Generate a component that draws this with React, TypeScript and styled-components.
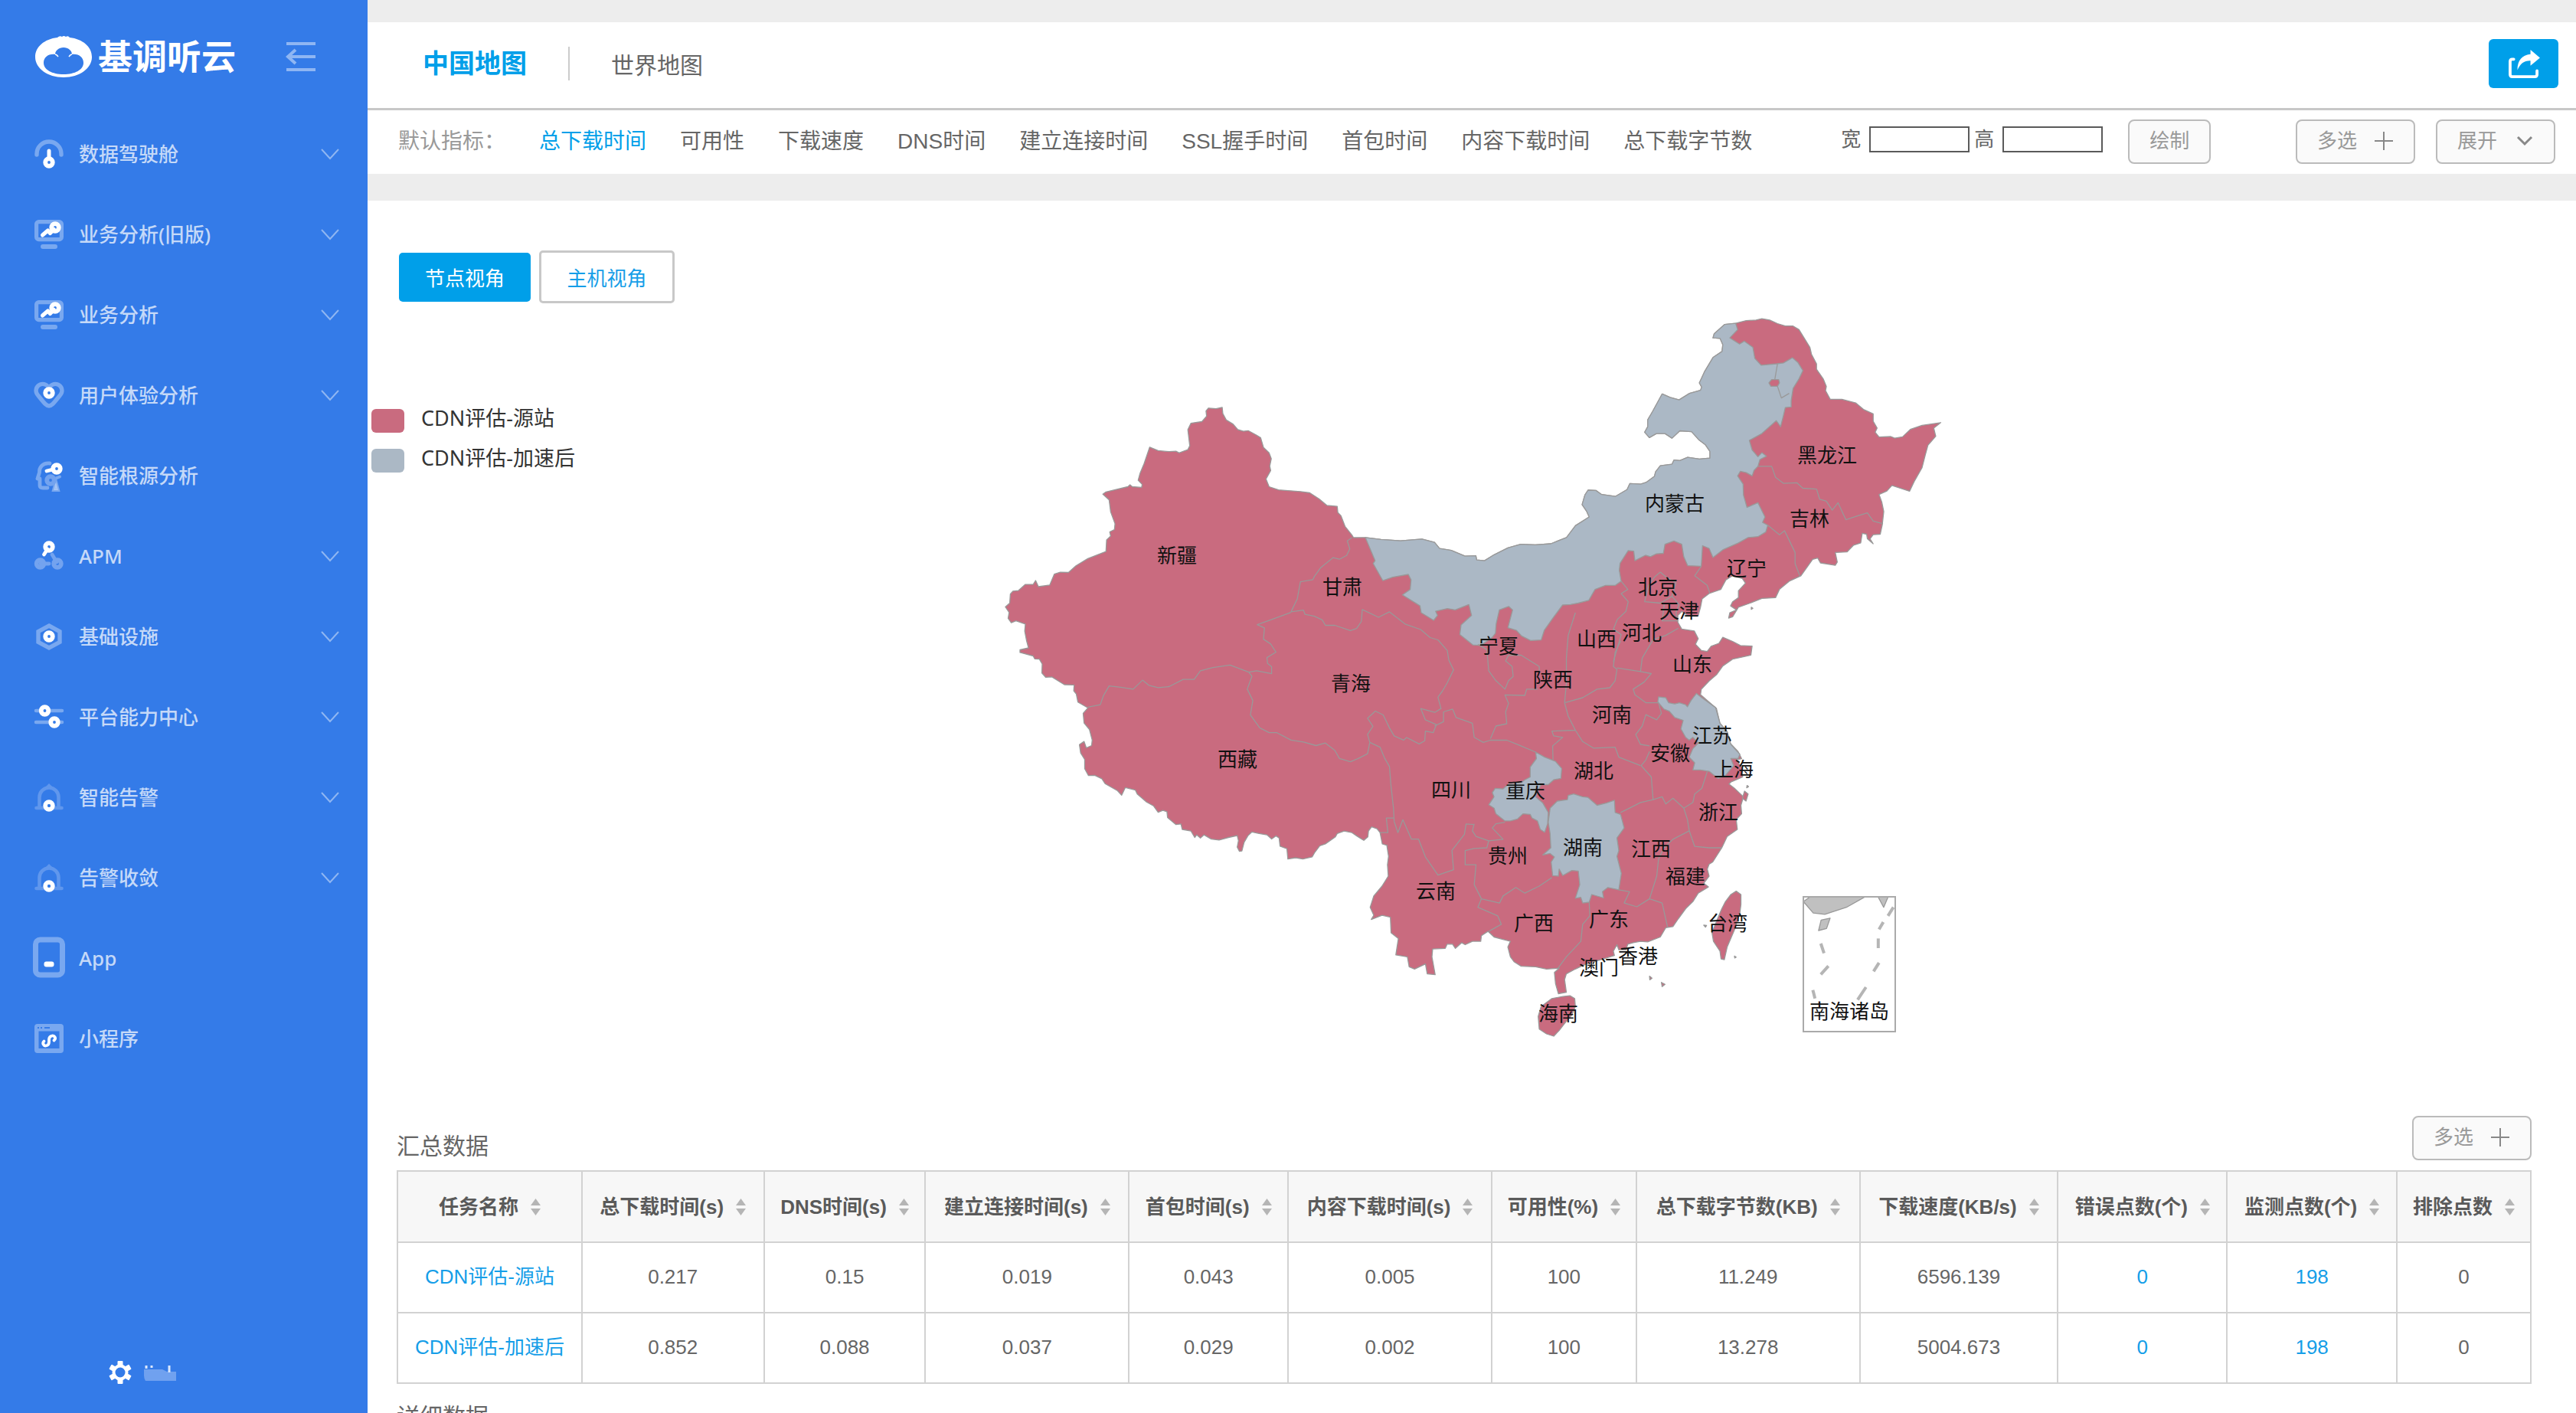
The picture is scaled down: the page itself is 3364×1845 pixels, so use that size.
import React from "react";
import styled, { createGlobalStyle } from "styled-components";

const latinFirst = `"Liberation Sans", Arial, "Noto Sans CJK SC", sans-serif`;
const humanist = `"Noto Sans", "Noto Sans CJK SC", sans-serif`;

const color = {
  side: "#347be8",
  brand: "#009fe9",
  page: "#ededed",
  text: "#666666",
  muted: "#999999",
  line: "#d2d2d2",
  origin: "#c96b7f",
  boosted: "#abb8c5",
  outline: "#999999",
};

const GlobalStyle = createGlobalStyle`
  *, *::before, *::after { box-sizing: border-box; }
  body { margin: 0; background: ${color.page}; font-family: ${latinFirst}; color: ${color.text}; }
  button, input { font-family: inherit; margin: 0; }
  a { text-decoration: none; }
  h1, h2, ul { margin: 0; padding: 0; font-weight: 400; }
  ul { list-style: none; }
  svg { display: block; overflow: visible; }
`;

/* ---------- shell ---------- */

const Shell = styled.div`
  display: flex;
  height: 100vh;
  overflow: hidden;
`;

const Sidebar = styled.aside`
  flex: 0 0 480px;
  display: flex;
  flex-direction: column;
  background: ${color.side};
  font-family: ${humanist};
`;

const Brand = styled.div`
  display: flex;
  align-items: center;
  height: 148px;
  padding: 0 68px 0 46px;
`;

const BrandName = styled.span`
  margin-left: 8px;
  font-size: 45px;
  line-height: 60px;
  font-weight: 700;
  color: #ffffff;
`;

const PlainButton = styled.button`
  border: 0;
  padding: 0;
  background: none;
  cursor: pointer;
`;

const CollapseButton = styled(PlainButton)`
  margin-left: auto;
`;

const MenuLink = styled.a`
  display: flex;
  align-items: center;
  height: 105px;
  padding: 0 37px 0 45px;
  gap: 20px;
  font-size: 26px;
  line-height: 40px;
  font-weight: 500;
  color: rgba(255, 255, 255, 0.72);
`;

const MenuLabel = styled.span`
  flex: 1;
`;

const Account = styled.div`
  display: flex;
  align-items: center;
  gap: 16px;
  height: 106px;
  margin-top: auto;
  padding-left: 142px;
`;

const Main = styled.main`
  flex: 1;
  min-width: 0;
  padding-top: 29px;
  overflow: hidden;
`;

/* ---------- header ---------- */

const TabBar = styled.header`
  display: flex;
  align-items: center;
  height: 115px;
  padding: 0 23px 4px 72px;
  background: #ffffff;
  border-bottom: 3px solid #c8c8c8;
`;

const Tab = styled.a<{ $active?: boolean }>`
  padding-top: ${(p) => (p.$active ? 0 : 6)}px;
  font-size: ${(p) => (p.$active ? 34 : 30)}px;
  line-height: 48px;
  font-weight: ${(p) => (p.$active ? 700 : 400)};
  color: ${(p) => (p.$active ? color.brand : color.text)};
`;

const TabDivider = styled.span`
  width: 2px;
  height: 44px;
  margin: 0 54px;
  background: #cccccc;
`;

const ShareButton = styled(PlainButton)`
  display: grid;
  place-items: center;
  width: 91px;
  height: 64px;
  margin-left: auto;
  border-radius: 6px;
  background: ${color.brand};
`;

const MetricBar = styled.nav`
  display: flex;
  align-items: center;
  height: 83px;
  padding: 0 27px 2px 40px;
  background: #ffffff;
  font-size: 28px;
  line-height: 40px;
  white-space: nowrap;
`;

const MetricCaption = styled.span`
  margin-right: 44px;
  color: ${color.muted};
`;

const MetricList = styled.ul`
  display: flex;
  gap: 44px;
`;

const MetricLink = styled.a<{ $active?: boolean }>`
  color: ${(p) => (p.$active ? color.brand : color.text)};
`;

const SizeForm = styled.form`
  display: flex;
  align-items: center;
  gap: 6px;
  margin-left: 116px;
`;

const SizeField = styled.label`
  display: flex;
  align-items: center;
  gap: 11px;
  padding-bottom: 6px;
  font-size: 26px;
`;

const SizeInput = styled.input`
  width: 131px;
  height: 34px;
  border: 2px solid #5a5a5a;
  border-radius: 0;
  background: #ffffff;
  font-size: 26px;
`;

const OutlineButton = styled.button`
  display: flex;
  align-items: center;
  justify-content: center;
  gap: 22px;
  height: 58px;
  padding: 0 26px 2px;
  border: 2px solid #bbbbbb;
  border-radius: 8px;
  background: #fafafa;
  font-size: 26px;
  line-height: 40px;
  color: ${color.muted};
  cursor: pointer;
`;

const DrawButton = styled(OutlineButton)`
  margin-left: 27px;
`;

const BarActions = styled.div`
  display: flex;
  gap: 27px;
  margin-left: auto;
`;

/* ---------- content ---------- */

const Content = styled.section`
  margin-top: 35px;
  padding-top: 65px;
  background: #ffffff;
`;

const ViewSwitch = styled.div`
  display: flex;
  align-items: center;
  gap: 11px;
  height: 69px;
  padding-left: 41px;
`;

const ViewButton = styled.button<{ $active?: boolean }>`
  width: ${(p) => (p.$active ? 172 : 177)}px;
  height: ${(p) => (p.$active ? 64 : 69)}px;
  padding: 0;
  border: ${(p) => (p.$active ? "0" : "3px solid #c8c8c8")};
  border-radius: 5px;
  background: ${(p) => (p.$active ? color.brand : "#ffffff")};
  color: ${(p) => (p.$active ? "#ffffff" : "#159ee8")};
  font-size: 26px;
  cursor: pointer;
`;

const ChartArea = styled.div`
  display: grid;
  grid-template-columns: 1fr minmax(0, 1236px) 1fr;
  padding-top: 4px;
`;

const Legend = styled.ul`
  padding: 123px 0 0 5px;
  font-family: ${humanist};
  font-size: 27px;
  color: #333333;
`;

const LegendItem = styled.li`
  display: flex;
  align-items: center;
  gap: 22px;
  height: 52px;
  line-height: 40px;
`;

const LegendText = styled.span`
  padding-bottom: 6px;
`;

const Swatch = styled.span<{ $fill: string }>`
  width: 43px;
  height: 31px;
  border-radius: 6px;
  background: ${(p) => p.$fill};
`;

const MapDrawing = styled.svg`
  width: 100%;
  height: auto;
  font-family: ${humanist};
  font-size: 26px;
  fill: #111111;
  text-anchor: middle;
`;

const Summary = styled.section`
  padding: 97px 58px 0 38px;
`;

const SummaryHead = styled.div`
  display: flex;
  align-items: flex-end;
  justify-content: space-between;
  padding: 0 0 13px 0;
`;

const SectionTitle = styled.h2`
  font-size: 30px;
  line-height: 36px;
`;

const DetailTitle = styled(SectionTitle)`
  margin-top: 25px;
`;

const DataTable = styled.table`
  width: 100%;
  table-layout: fixed;
  border-collapse: collapse;
  font-size: 26px;
  line-height: 32px;
  text-align: center;
`;

const HeadCell = styled.th<{ $share: number }>`
  width: ${(p) => p.$share}%;
  height: 93px;
  padding: 0;
  border: 2px solid ${color.line};
  background: #f7f7f7;
  color: #5a5a5a;
  font-weight: 700;
  white-space: nowrap;
`;

const HeadInner = styled.span`
  display: flex;
  align-items: center;
  justify-content: center;
  gap: 16px;
`;

const Cell = styled.td`
  height: 92px;
  padding: 0 0 2px;
  border: 2px solid ${color.line};
  white-space: nowrap;
`;

const CellLink = styled.a`
  color: #159ee8;
`;

/* ---------- sidebar icons ---------- */

const pale = "rgba(255,255,255,0.34)";

function Ring({ x, y, stroke = "#ffffff" }: { x: number; y: number; stroke?: string }) {
  return <circle cx={x} cy={y} r="4.8" fill="none" stroke={stroke} strokeWidth="5.8" />;
}

const bell = (
  <>
    <path d="M2.5 33h33M6.5 31V19a12.5 12.5 0 0 1 25 0v12" fill="none" stroke="rgb(96,151,237)" strokeWidth="4.6" strokeLinecap="round" />
    <path d="M19 1l5 5H14z" fill="rgb(96,151,237)" />
    <Ring x={19} y={30} />
    <circle cx="19" cy="30" r="2" fill={color.side} />
  </>
);

const monitor = (
  <>
    <rect x="2.6" y="2.6" width="32.8" height="23" rx="3" fill="none" stroke={pale} strokeWidth="5.2" />
    <rect x="8" y="32" width="22" height="6" rx="3" fill={pale} />
    <path d="M10.5 20l7-6 3 3.5 5-5" fill="none" stroke="#fff" strokeWidth="5" strokeLinecap="round" strokeLinejoin="round" />
    <Ring x={27} y={10} />
  </>
);

const icons: Record<string, React.ReactNode> = {
  gauge: (
    <>
      <path d="M3 20v-1a16 16 0 0 1 32 0v1" fill="none" stroke={pale} strokeWidth="5.4" strokeLinecap="round" />
      <path d="M19 15v10" stroke="#fff" strokeWidth="5" strokeLinecap="round" />
      <Ring x={19} y={30} />
    </>
  ),
  monitor,
  heart: (
    <>
      <path d="M19 33C16 33 14 31 4.500 19A8.500 8.500 0 0 1 17 7q2 2 4 0A8.500 8.500 0 0 1 33.500 19C24 31 22 33 19 33z" fill="none" stroke={pale} strokeWidth="5.4" strokeLinejoin="round" />
      <Ring x={19} y={16} />
    </>
  ),
  head: (
    <>
      <path d="M20 3C10 2 6 9 6.500 15L4 23h3v9q0 3 4 3h6" fill="none" stroke={pale} strokeWidth="4.800" strokeLinecap="round" strokeLinejoin="round" />
      <path d="M28 27l3 11h-6zM27 23l6-2.500" fill={pale} stroke={pale} strokeWidth="4" strokeLinecap="round" />
      <Ring x={21} y={25} stroke="#73a3ef" />
      <path d="M16 13l8-2" stroke="#fff" strokeWidth="4.800" strokeLinecap="round" />
      <Ring x={29} y={10} />
    </>
  ),
  nodes: (
    <>
      <path d="M8 29h11M23 17l6 10" stroke="#73a3ef" strokeWidth="4.800" strokeLinecap="round" />
      <Ring x={7.5} y={29} stroke="#73a3ef" />
      <Ring x={30} y={29} stroke="#73a3ef" />
      <path d="M17 10l-4.500 7" stroke="#fff" strokeWidth="4.800" strokeLinecap="round" />
      <Ring x={19} y={7} />
    </>
  ),
  hexagon: (
    <>
      <path d="M19 5l14 7.500v14L19 34 5 26.500v-14z" fill="none" stroke={pale} strokeWidth="5.400" />
      <Ring x={19} y={19} />
    </>
  ),
  sliders: (
    <>
      <path d="M2 11h34M2 26h34" stroke={pale} strokeWidth="4.500" strokeLinecap="round" />
      <circle cx="13.500" cy="11" r="7.400" fill={color.side} />
      <circle cx="26" cy="26" r="7.400" fill={color.side} />
      <Ring x={13.5} y={11} />
      <Ring x={26} y={26} />
    </>
  ),
  bell,
  phone: (
    <>
      <rect x="1.500" y="-5" width="35" height="46" rx="6" fill="none" stroke={pale} strokeWidth="7" />
      <rect x="12.500" y="23.500" width="13" height="7" rx="3" fill="#fff" />
    </>
  ),
  applet: (
    <>
      <path fillRule="evenodd" d="M4 0h30a4 4 0 0 1 4 4v30a4 4 0 0 1-4 4H4a4 4 0 0 1-4-4V4a4 4 0 0 1 4-4zM5.500 9.500v22.500h27V9.500z" fill={pale} />
      <path d="M4 5h2M8 5h2M13 5h7" stroke={color.side} strokeWidth="2" />
      <path d="M12.500 22.500c-3 3 0 6.500 2.500 6 3-.500 4-2.500 4-5v-3c0-2.500 1-4.500 4-5 3-.500 6 3 2.500 6" fill="none" stroke="#fff" strokeWidth="3.800" strokeLinecap="round" />
    </>
  ),
};

const menu = [
  { label: "数据驾驶舱", icon: "gauge", open: true },
  { label: "业务分析(旧版)", icon: "monitor", open: true },
  { label: "业务分析", icon: "monitor", open: true },
  { label: "用户体验分析", icon: "heart", open: true },
  { label: "智能根源分析", icon: "head", open: false },
  { label: "APM", icon: "nodes", open: true },
  { label: "基础设施", icon: "hexagon", open: true },
  { label: "平台能力中心", icon: "sliders", open: true },
  { label: "智能告警", icon: "bell", open: true },
  { label: "告警收敛", icon: "bell", open: true },
  { label: "App", icon: "phone", open: false },
  { label: "小程序", icon: "applet", open: false },
];

/* ---------- map geometry ---------- */

type Scale = [x: number, y: number, kx: number, ky: number];

// Each part of the country is digitised on its own grid; `plot` brings a part onto the shared canvas.
function plot([x, y, kx, ky]: Scale, list: string) {
  return list
    .trim()
    .split(/\s+/)
    .map((pair) => {
      const [px, py] = pair.split(",").map(Number);
      return `${(x + px * kx).toFixed(1)},${(y + py * ky).toFixed(1)}`;
    })
    .join(" ");
}

const WEST: Scale = [1290, 500, 640 / 1568, 660 / 1568];
const NORTH: Scale = [1760, 400, 800 / 1568, 560 / 1568];
const SOUTH: Scale = [1760, 800, 740 / 1568, 580 / 1568];

const westCoast = plot(WEST, `1278,1435 1262,1430 1255,1395 1245,1383 1228,1377 1218,1390 1216,1408 1203,1419 1180,1405 1165,1395
1140,1390 1118,1398 1112,1408 1080,1430 1062,1436 1045,1458 1038,1470 1008,1477 985,1473 960,1477 957,1445 935,1437 932,1412 922,1405
908,1415 893,1402 868,1398 845,1393 832,1405 820,1425 813,1452 805,1453 798,1440 802,1420 798,1404 770,1410 740,1418 715,1415 692,1402
680,1412 668,1402 662,1410 650,1390 622,1385 618,1368 602,1370 575,1348 573,1330 560,1326 545,1332 530,1312 508,1300 478,1275 472,1263
440,1255 428,1279 415,1265 375,1243 365,1228 342,1217 322,1218 310,1197 310,1168 297,1148 293,1122 308,1112 315,1132 332,1125 334,1108
325,1075 308,1055 305,1025 320,1008 288,990 283,965 275,955 276,937 245,936 205,912 185,913 173,900 174,872 165,857 150,856 145,847
103,836 103,828 130,822 124,800 118,770 120,748 90,738 75,744 65,730 68,712 56,695 70,683 72,655 80,646 98,644 120,625 145,625 153,613
162,632 198,627 213,593 232,587 258,588 282,567 320,545 378,523 380,487 393,475 390,462 405,455 407,437 393,400 388,363 368,345 378,338
448,322 455,316 462,322 492,324 494,315 481,302 487,280 500,250 518,199 545,210 580,213 602,212 612,217 640,207 646,195 640,145 650,125
685,120 700,103 698,87 706,78 730,80 750,76 752,95 763,115 785,128 800,145 818,150 833,148 860,162 873,170 882,200 900,217 907,235
902,258 905,272 890,298 900,322 930,332 960,334 1000,337 1030,341 1060,360 1085,380 1118,383 1120,402 1130,412 1143,445 1165,472 1170,480`);

const mongoliaNorth = plot(NORTH, `45,845 85,852 135,857 190,851 222,863 235,885 265,892 300,913 328,912 330,927 350,930 375,908 410,883
443,870 480,872 520,868 560,845 583,802 618,770 612,750 600,725 607,690 615,672 635,673 650,688 685,695 715,670 722,648 750,650 765,643
785,622 788,605 800,583 830,577 835,562 850,564 870,552 900,558 927,555 927,530 915,505 898,487 880,458 850,455 830,482 812,465 790,465
772,480 760,460 768,440 768,415 780,385 805,320 825,333 848,342 875,318 903,307 906,295 900,280 913,240 935,187 958,165 960,140 953,117
935,115 938,100 965,66 993,62`);

const eastCoast = plot(NORTH, `1020,52 1045,50 1060,45 1080,50 1100,63 1120,72 1140,72 1155,85 1168,115 1183,150 1187,175 1200,210
1200,230 1217,265 1225,293 1223,308 1235,340 1265,340 1300,353 1320,377 1345,393 1345,420 1355,445 1350,460 1360,478 1390,476 1400,482
1420,477 1440,450 1470,435 1518,425 1500,445 1505,475 1485,508 1478,545 1470,590 1450,640 1438,676 1393,655 1380,675 1360,688 1367,715
1372,750 1368,800 1363,833 1345,835 1337,850 1345,868 1330,850 1328,833 1317,830 1313,865 1295,873 1278,898 1248,900 1253,935 1248,947
1210,938 1203,920 1190,925 1160,985 1130,1005 1105,1035 1095,1065 1060,1068 1030,1085 1000,1100 985,1135 975,1140 978,1120 995,1110
980,1095 985,1080 1000,1065 1000,1040 1018,1012 1010,995 985,985 968,1000 955,1035 925,1050 907,1070 903,1100 897,1130 870,1130
855,1115 845,1130 845,1155 855,1180 887,1187 897,1215 890,1235 905,1258 920,1262 930,1243 950,1232 960,1210 985,1225 1005,1240
1035,1242 1032,1275 1010,1282 985,1290 960,1315 945,1345 925,1370 905,1400 903,1420 942,1468`);

const southCoast = plot(SOUTH, `1020,337 1030,390 1050,420 1058,460 1080,490 1090,515 1075,520 1090,545 1093,580 1060,598 1055,605
1070,620 1095,650 1088,680 1090,710 1075,730 1078,765 1050,790 1035,830 1010,880 1000,888 995,905 1000,930 985,955 998,968 970,990
955,1020 935,1045 915,1080 900,1108 880,1112 865,1145 830,1162 810,1160 790,1165 775,1170 770,1190 750,1190 745,1172 735,1195
738,1210 700,1225 660,1240 630,1258 605,1275 600,1295 605,1340 583,1345 575,1310 572,1270 585,1255 550,1258 520,1250 480,1248
460,1232 450,1215 443,1180 450,1160 425,1152 405,1145 388,1125 370,1140 368,1160 345,1160 325,1172 315,1165 298,1185 290,1170
275,1170 270,1185 235,1187 233,1215 242,1278 220,1275 215,1240 185,1258 170,1250 165,1215 133,1208 140,1150 120,1130 118,1075
95,1068 65,1083 72,1068 62,1040 72,1000 95,965 112,930 110,890 113,860 108,820`);

const mainland = [westCoast, mongoliaNorth, eastCoast, southCoast].join(" ");

const innerMongolia = [
  mongoliaNorth,
  plot(NORTH, `998,85 978,115 1003,138 1015,127 1037,150 1042,190 1058,215 1098,210 1115,207 1138,188 1152,205 1165,235 1155,265
1140,300 1135,345 1135,368 1120,370 1115,400 1108,440 1097,418 1060,465 1028,490 1035,525 1050,550 1060,535 1072,548 1055,560 1050,585
1040,600 1035,620 1020,608 1005,603 998,620 1012,650 1013,690 1022,735 1050,718 1068,770 1062,790 1075,800 1070,825 1050,842 1025,845
1000,865 960,890 935,918 925,885 908,875 905,950 870,948 860,915 855,870 835,858 812,870 808,903 790,905 775,915 762,910 735,930
732,895 718,893 697,940 695,965 700,1005 685,1020 660,1020 633,1035 617,1075 590,1085 570,1090 550,1092 525,1140 503,1185 495,1220
468,1222 445,1205 432,1185 410,1175 422,1110 412,1097 388,1110 380,1160 378,1195 370,1210 340,1240 320,1238 287,1200 290,1165 317,1130
310,1090 275,1110 255,1105 225,1115 230,1130 220,1148 188,1120 185,1095 140,1055 160,1035 162,1000 155,980 115,990 90,1003 65,940
70,930`),
].join(" ");

const boostedRegions = [
  innerMongolia,
  plot(SOUTH, `520,492 545,510 575,525 592,550 590,585 570,590 555,607 535,607 525,630 520,650 540,672 555,705 553,745 545,775
533,765 525,735 510,725 505,712 485,710 470,728 450,735 435,735 410,710 405,690 390,678 405,650 400,635 408,620 430,622 445,605
480,600 490,590 505,580 505,545 522,515`),
  plot(SOUTH, `560,690 580,665 608,660 610,645 625,640 650,650 665,652 690,680 715,672 738,662 740,705 755,712 765,760 745,795
750,840 745,860 757,920 750,978 720,970 705,985 708,1007 675,995 668,1022 650,1025 645,1005 630,1008 642,960 638,912 620,910
595,928 585,905 583,930 567,928 563,880 572,862 560,850 540,855 562,830 560,780 555,740`),
  plot(SOUTH, `860,297 880,300 888,318 905,322 918,318 935,325 940,332 950,310 965,285 980,300 1018,335 1030,390 1050,420 1060,465
1085,500 1080,515 1060,515 1068,540 1045,575 1025,585 1000,560 975,555 955,555 960,530 945,510 955,480 970,460 955,440 945,450
935,440 922,410 928,380 905,370 890,348 875,340 858,315`),
];

const originIslands = [
  plot(NORTH, "1085,268 1103,268 1105,280 1100,292 1083,292 1078,280"),
  plot(SOUTH, `595,1355 615,1352 628,1362 630,1390 620,1420 600,1450 585,1475 570,1495 550,1487 530,1470 527,1425 535,1390 565,1362`),
  plot(SOUTH, `1075,983 1088,995 1088,1030 1085,1060 1070,1120 1050,1180 1042,1225 1033,1222 1030,1195 1012,1160 1008,1130
1020,1090 1035,1045 1045,1020 1060,995`),
  plot(SOUTH, "1098,630 1108,640 1102,665 1092,655"),
  plot(SOUTH, "868,1305 878,1312 870,1320"),
  plot(SOUTH, "835,1283 842,1290 836,1296"),
  plot(SOUTH, "985,1103 993,1104 990,1110"),
  plot(SOUTH, "1070,1212 1075,1216 1071,1219"),
  plot(SOUTH, "1105,610 1109,614 1104,618"),
  plot(NORTH, "1033,1100 1037,1104 1033,1108"),
];

const borders = [
  plot(WEST, "1165,480 1150,490 1158,515 1148,535 1125,547 1105,542 1065,573 1045,600 1040,610 1000,617 990,670 970,710"),
  plot(WEST, "970,712 905,735 862,750 885,760 882,795 905,810 922,835 893,852 895,870 908,880 908,902 860,893 835,897"),
  plot(WEST, "320,1006 360,998 370,970 388,940 425,944 465,950 495,922 515,938 545,945 580,942 625,920 660,920 680,893 720,883 775,875 835,897"),
  plot(WEST, "835,897 845,910 830,950 848,985 840,1030 870,1070 900,1085 925,1085 970,1108 1010,1114 1050,1125 1080,1117 1110,1140 1125,1165 1160,1175 1185,1165 1215,1150 1222,1115"),
  plot(WEST, `970,710 1010,705 1015,718 1045,724 1070,735 1080,752 1110,752 1160,768 1180,762 1195,740 1198,703 1250,727 1285,710 1335,748
1385,765 1415,790 1440,797 1470,830 1475,860 1490,890 1470,930 1455,955 1440,975 1450,1010 1430,1022 1385,1010 1400,1045 1435,1060
1425,1085 1400,1080 1398,1110 1380,1120 1340,1100 1330,1108 1300,1095 1285,1070 1265,1030 1240,1018 1215,1040 1232,1065 1215,1090 1222,1115`),
  plot(WEST, `1222,1115 1255,1130 1270,1165 1285,1190 1290,1250 1298,1320 1300,1360 1312,1395 1328,1355 1355,1415 1378,1415 1400,1470
1440,1527 1490,1510 1485,1450 1525,1400 1530,1368 1555,1370`),
  plot(WEST, "1255,1395 1280,1395 1275,1350 1298,1350"),
  plot(SOUTH, "240,400 265,385 265,350 290,340 300,370 345,390 350,440 375,458 395,450 440,450 475,468 520,492"),
  plot(SOUTH, "395,445 410,400 440,392 437,350 445,320 435,290 490,292 495,270 525,270"),
  plot(SOUTH, "360,112 385,130 390,205 410,240 435,270 445,240 458,225 455,190 437,170 445,150 480,150 530,190 530,205"),
  plot(SOUTH, "630,0 610,80 605,160 605,250 600,318"),
  plot(SOUTH, "755,100 740,140 735,190 745,200 740,240 725,265 690,270 650,300 600,318"),
  plot(SOUTH, "745,195 810,208 815,160 845,95 880,80 915,55"),
  plot(SOUTH, "810,208 840,215 820,245 790,270 795,290 825,318 860,318"),
  plot(SOUTH, "600,318 610,365 630,415 565,418 570,435 595,440 567,470 568,520"),
  plot(SOUTH, "630,415 650,455 680,478 740,475 750,510 810,540"),
  plot(SOUTH, "860,318 868,355 855,378 825,360 815,400 797,430 810,465 835,470"),
  plot(SOUTH, "835,490 825,520 812,540 840,580 845,660 870,650 880,675 900,655 930,690"),
  plot(SOUTH, "995,560 980,620 960,640 955,670 930,690"),
  plot(SOUTH, "930,690 940,730 945,770 900,800 875,830 860,870 855,930 835,1010 870,1025 885,1110"),
  plot(SOUTH, "945,770 960,825 1000,830 1035,830"),
  plot(SOUTH, "755,705 780,690 810,670 845,660"),
  plot(SOUTH, "750,978 780,985 765,1025 800,1038 835,1010"),
  plot(SOUTH, "668,1022 670,1070 650,1100 645,1160 605,1215 580,1258"),
  plot(SOUTH, "370,1010 420,1025 430,1000 465,970 490,990 530,965 565,935"),
  plot(SOUTH, "370,1010 360,1040 415,1070 425,1100 390,1125"),
  plot(SOUTH, "370,1010 350,960 355,890 325,890 325,840 350,832 385,830 390,805"),
  plot(SOUTH, "350,745 345,770 355,790 390,805 430,800 400,760 410,745 435,740"),
  plot(NORTH, "1050,585 1085,585 1095,625 1115,647 1150,645 1165,665 1200,668 1208,705 1225,712 1240,745 1255,718 1275,780 1300,768 1330,755 1345,785 1370,795"),
  plot(NORTH, "1075,800 1105,835 1118,820 1145,900 1145,940 1157,985"),
  plot(NORTH, "905,950 888,985 920,1020 927,1050"),
  plot(NORTH, "700,1005 717,1035 700,1050 718,1080 712,1115 690,1145 680,1180 700,1200 690,1250 680,1300"),
  plot(NORTH, "800,972 815,990 840,1010 830,1060 800,1085 760,1080 770,1020 785,990 800,972"),
  plot(NORTH, "830,1060 848,1090 840,1120 845,1150 805,1150 810,1090"),
  plot(NORTH, "1100,210 1093,268"),
  plot(NORTH, "1100,292 1110,335 1130,318"),
];

const insetShapes = [
  plot(SOUTH, "1261,1020 1278,1004 1430,1004 1380,1040 1320,1065 1288,1060"),
  plot(SOUTH, "1468,1004 1495,1004 1483,1040"),
  plot(SOUTH, "1310,1085 1335,1078 1325,1115 1303,1122"),
];

const insetDashes = [
  "1510,1040 1495,1070", "1482,1092 1470,1118", "1468,1150 1468,1184", "1470,1236 1455,1266", "1434,1322 1411,1366",
  "1287,1332 1293,1362", "1330,1247 1309,1277", "1309,1168 1318,1202",
].map((line) => plot(SOUTH, line));

const provinces: [string, number, number][] = [
  ["新疆", 1537, 735], ["甘肃", 1753, 776], ["青海", 1764, 902], ["西藏", 1616, 1001], ["四川", 1895, 1041],
  ["云南", 1875, 1173], ["内蒙古", 2187, 667], ["黑龙江", 2386, 604], ["吉林", 2363, 687], ["辽宁", 2281, 752],
  ["北京", 2165, 776], ["天津", 2193, 807], ["宁夏", 1957, 853], ["山西", 2085, 844], ["河北", 2144, 836],
  ["山东", 2210, 877], ["陕西", 2028, 897], ["河南", 2105, 943], ["江苏", 2236, 970], ["安徽", 2181, 993],
  ["上海", 2264, 1014], ["湖北", 2081, 1016], ["重庆", 1992, 1042], ["湖南", 2067, 1116], ["浙江", 2244, 1070],
  ["江西", 2156, 1118], ["福建", 2201, 1154], ["贵州", 1969, 1127], ["广西", 2003, 1215], ["广东", 2101, 1210],
  ["澳门", 2088, 1273], ["香港", 2139, 1258], ["海南", 2035, 1333], ["台湾", 2256, 1215], ["南海诸岛", 2415, 1330],
];

function ChinaMap() {
  return (
    <MapDrawing viewBox="1304 400 1236 960" role="img" aria-label="中国地图">
      <g stroke={color.outline} strokeWidth="1.3" strokeLinejoin="round">
        <polygon points={mainland} fill={color.origin} />
        {boostedRegions.map((points) => (
          <polygon key={points} points={points} fill={color.boosted} />
        ))}
        {originIslands.map((points) => (
          <polygon key={points} points={points} fill={color.origin} />
        ))}
        {borders.map((points) => (
          <polyline key={points} points={points} fill="none" />
        ))}
        {insetShapes.map((points) => (
          <polygon key={points} points={points} fill="#c0c0c0" />
        ))}
      </g>
      {insetDashes.map((points) => (
        <polyline key={points} points={points} fill="none" stroke="#b5b5b5" strokeWidth="4" />
      ))}
      <rect x="2355" y="1171" width="120" height="176" fill="none" stroke="#aaaaaa" strokeWidth="2" />
      {provinces.map(([name, x, y]) => (
        <text key={name} x={x} y={y}>
          {name}
        </text>
      ))}
    </MapDrawing>
  );
}

/* ---------- small drawings ---------- */

function PlusIcon() {
  return (
    <svg width="26" height="24" viewBox="0 0 26 24" stroke="#888888" strokeWidth="2" aria-hidden>
      <path d="M1 12h24M13 0v24" />
    </svg>
  );
}

function SortIcon() {
  return (
    <svg width="13" height="22" viewBox="0 0 13 22" fill="#b5b5b5" aria-hidden>
      <path d="M6.500 0L13 9H0zM6.500 22L0 13h13z" />
    </svg>
  );
}

/* ---------- data ---------- */

const metrics = ["总下载时间", "可用性", "下载速度", "DNS时间", "建立连接时间", "SSL握手时间", "首包时间", "内容下载时间", "总下载字节数"];

const columns: [string, number][] = [
  ["任务名称", 241], ["总下载时间(s)", 238], ["DNS时间(s)", 211], ["建立连接时间(s)", 266], ["首包时间(s)", 208],
  ["内容下载时间(s)", 266], ["可用性(%)", 189], ["总下载字节数(KB)", 292], ["下载速度(KB/s)", 259], ["错误点数(个)", 221],
  ["监测点数(个)", 222], ["排除点数", 175],
];
const totalShare = columns.reduce((sum, [, share]) => sum + share, 0);
const linkColumns = new Set([0, 9, 10]);

const rows = [
  ["CDN评估-源站", "0.217", "0.15", "0.019", "0.043", "0.005", "100", "11.249", "6596.139", "0", "198", "0"],
  ["CDN评估-加速后", "0.852", "0.088", "0.037", "0.029", "0.002", "100", "13.278", "5004.673", "0", "198", "0"],
];

export default function App() {
  return (
    <>
      <GlobalStyle />
      <Shell>
        <Sidebar>
          <Brand>
            <svg width="74" height="54" viewBox="0 0 74 54" aria-hidden>
              <path d="M29 2q3-3 6-1 2-2 5 0 3-2 5 1C62 4 74 14 74 27.500 74 42 58 54 37 54S0 42 0 27.500C0 14 12 4 29 2z" fill="#fff" />
              <path d="M37 50C22 50 11 44 11 35c0-7 6-12 15-11 0-5 5-9 11-9s11 4 11 9c9-1 15 4 15 11 0 9-11 15-26 15z" fill={color.side} />
              <path d="M26 24q2 0 4 3M48 24q-2 0-4 3" fill="none" stroke="#fff" strokeWidth="1.500" />
            </svg>
            <BrandName>基调听云</BrandName>
            <CollapseButton type="button" aria-label="收起菜单">
              <svg width="38" height="38" viewBox="0 0 38 38" fill="none" stroke="#8fb6f3" strokeWidth="4">
                <path d="M0 2h38M1 19h37M0 36h38M12 10L2 19l10 9" />
              </svg>
            </CollapseButton>
          </Brand>
          <nav aria-label="主菜单">
            <ul>
              {menu.map((item) => (
                <li key={item.label}>
                  <MenuLink href="#">
                    <svg width="38" height="38" viewBox="0 0 38 38" aria-hidden>
                      {icons[item.icon]}
                    </svg>
                    <MenuLabel>{item.label}</MenuLabel>
                    {item.open && (
                      <svg width="24" height="14" viewBox="0 0 24 14" fill="none" stroke="rgba(255,255,255,0.45)" strokeWidth="2" aria-hidden>
                        <path d="M1 1l11 12L23 1" />
                      </svg>
                    )}
                  </MenuLink>
                </li>
              ))}
            </ul>
          </nav>
          <Account>
            <svg width="30" height="30" viewBox="0 0 30 30" aria-hidden>
              <circle cx="15" cy="15" r="8.500" fill="none" stroke="#fff" strokeWidth="4" />
              {[0, 60, 120, 180, 240, 300].map((angle) => (
                <rect key={angle} x="11.500" y="0" width="7" height="6" rx="1" fill="#fff" transform={`rotate(${angle} 15 15)`} />
              ))}
            </svg>
            <svg width="42" height="21" viewBox="0 0 42 21" aria-hidden>
              <path d="M0 6h24l6 3h12v12H2q-2-3-2-7z" fill="#70a1ef" />
              <path d="M3 1v4M10 1v3M33 1v9" stroke="#dbe8fc" strokeWidth="3" />
            </svg>
          </Account>
        </Sidebar>

        <Main>
          <TabBar>
            <Tab href="#" $active>
              中国地图
            </Tab>
            <TabDivider />
            <Tab href="#">世界地图</Tab>
            <ShareButton type="button" aria-label="分享">
              <svg width="42" height="38" viewBox="0 0 44 40" aria-hidden>
                <path d="M8 14H6q-3 0-3 3v18q0 3 3 3h31q3 0 3-3v-5" fill="none" stroke="#fff" strokeWidth="4" strokeLinecap="round" />
                <path d="M31 1l13 11-13 11v-7C22 16 17 20 13 29c0-14 7-21 18-22z" fill="#fff" />
              </svg>
            </ShareButton>
          </TabBar>

          <MetricBar aria-label="指标">
            <MetricCaption>默认指标：</MetricCaption>
            <MetricList>
              {metrics.map((name, i) => (
                <li key={name}>
                  <MetricLink href="#" $active={i === 0}>
                    {name}
                  </MetricLink>
                </li>
              ))}
            </MetricList>
            <SizeForm>
              <SizeField>
                宽
                <SizeInput type="text" />
              </SizeField>
              <SizeField>
                高
                <SizeInput type="text" />
              </SizeField>
              <DrawButton type="button">绘制</DrawButton>
            </SizeForm>
            <BarActions>
              <OutlineButton type="button">
                多选
                <PlusIcon />
              </OutlineButton>
              <OutlineButton type="button">
                展开
                <svg width="26" height="12" viewBox="0 0 26 12" fill="none" stroke="#888888" strokeWidth="3" aria-hidden>
                  <path d="M5 1l9 9 9-9" />
                </svg>
              </OutlineButton>
            </BarActions>
          </MetricBar>

          <Content>
            <ViewSwitch>
              <ViewButton type="button" $active>
                节点视角
              </ViewButton>
              <ViewButton type="button">主机视角</ViewButton>
            </ViewSwitch>

            <ChartArea>
              <Legend>
                <LegendItem>
                  <Swatch $fill={color.origin} />
                  <LegendText>CDN评估-源站</LegendText>
                </LegendItem>
                <LegendItem>
                  <Swatch $fill={color.boosted} />
                  <LegendText>CDN评估-加速后</LegendText>
                </LegendItem>
              </Legend>
              <ChinaMap />
            </ChartArea>

            <Summary>
              <SummaryHead>
                <SectionTitle>汇总数据</SectionTitle>
                <OutlineButton type="button">
                  多选
                  <PlusIcon />
                </OutlineButton>
              </SummaryHead>
              <DataTable>
                <thead>
                  <tr>
                    {columns.map(([name, share]) => (
                      <HeadCell key={name} scope="col" $share={(share / totalShare) * 100}>
                        <HeadInner>
                          {name}
                          <PlainButton type="button" aria-label={`按${name}排序`}>
                            <SortIcon />
                          </PlainButton>
                        </HeadInner>
                      </HeadCell>
                    ))}
                  </tr>
                </thead>
                <tbody>
                  {rows.map((row) => (
                    <tr key={row[0]}>
                      {row.map((value, i) => (
                        <Cell key={columns[i][0]}>{linkColumns.has(i) ? <CellLink href="#">{value}</CellLink> : value}</Cell>
                      ))}
                    </tr>
                  ))}
                </tbody>
              </DataTable>
              <DetailTitle>详细数据</DetailTitle>
            </Summary>
          </Content>
        </Main>
      </Shell>
    </>
  );
}
